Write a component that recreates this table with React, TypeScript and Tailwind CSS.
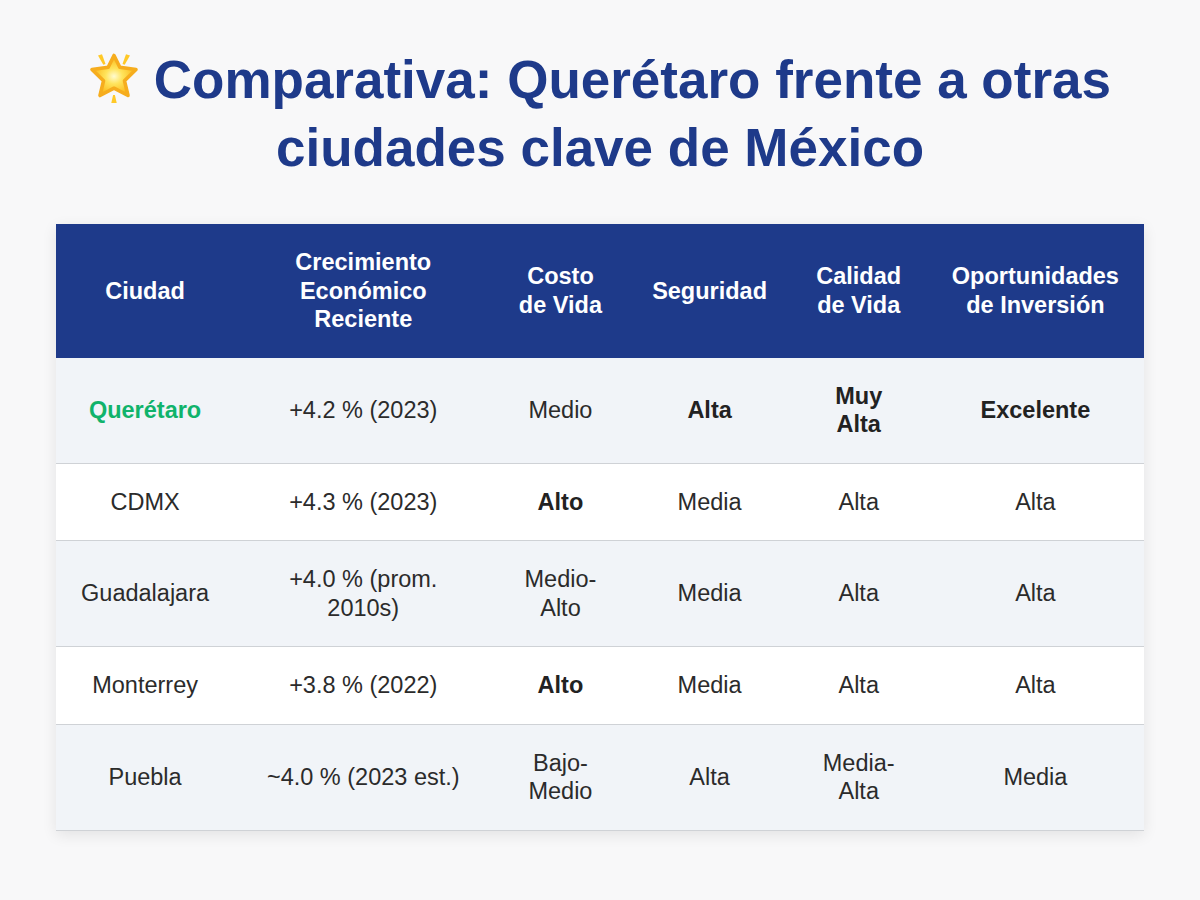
import { ReactNode } from 'react'

// ─── Datos ────────────────────────────────────────────────────────────────────

interface Row {
  ciudad: string
  crecimiento: string
  costo: ReactNode
  seguridad: ReactNode
  calidad: ReactNode
  inversion: ReactNode
  highlight?: boolean
}

const B = ({ children }: { children: ReactNode }) => (
  <span className="font-bold text-[#222]">{children}</span>
)

const rows: Row[] = [
  {
    ciudad: 'Querétaro',
    crecimiento: '+4.2 % (2023)',
    costo: 'Medio',
    seguridad: <B>Alta</B>,
    calidad: <B>Muy Alta</B>,
    inversion: <B>Excelente</B>,
    highlight: true,
  },
  {
    ciudad: 'CDMX',
    crecimiento: '+4.3 % (2023)',
    costo: <B>Alto</B>,
    seguridad: 'Media',
    calidad: 'Alta',
    inversion: 'Alta',
  },
  {
    ciudad: 'Guadalajara',
    crecimiento: '+4.0 % (prom. 2010s)',
    costo: 'Medio-Alto',
    seguridad: 'Media',
    calidad: 'Alta',
    inversion: 'Alta',
  },
  {
    ciudad: 'Monterrey',
    crecimiento: '+3.8 % (2022)',
    costo: <B>Alto</B>,
    seguridad: 'Media',
    calidad: 'Alta',
    inversion: 'Alta',
  },
  {
    ciudad: 'Puebla',
    crecimiento: '~4.0 % (2023 est.)',
    costo: 'Bajo-Medio',
    seguridad: 'Alta',
    calidad: 'Media-Alta',
    inversion: 'Media',
  },
]

const headers = [
  'Ciudad',
  'Crecimiento Económico Reciente',
  'Costo de Vida',
  'Seguridad',
  'Calidad de Vida',
  'Oportunidades de Inversión',
]

const widths = ['w-[178px]', 'w-[258px]', 'w-[136px]', 'w-[162px]', 'w-[136px]', 'w-[217px]']

// ─── Icono ────────────────────────────────────────────────────────────────────

function GlowingStar() {
  return (
    <svg
      viewBox="0 0 50 52"
      className="inline-block h-[52px] w-[50px] align-[-6px]"
      aria-hidden
    >
      <defs>
        <radialGradient id="starFill" cx="0.5" cy="0.52" r="0.55">
          <stop offset="0" stopColor="#fffbd0" />
          <stop offset="0.35" stopColor="#ffe45c" />
          <stop offset="0.8" stopColor="#fbbf24" />
          <stop offset="1" stopColor="#f39a12" />
        </radialGradient>
      </defs>
      <g fill="#ffc928">
        <path d="M9 3.5 L13 2.2 L16.5 12 L14.3 12.8 Z" />
        <path d="M41 3.5 L37 2.2 L33.5 12 L35.7 12.8 Z" />
        <path d="M22.3 51 L27.7 51 L25.9 43 L24.1 43 Z" />
      </g>
      <path
        d="M25 3.5 L30.8 15.2 L47 17.5 L35.5 28.8 L39 43.5 L25 36.2 L11 43.5 L14.5 28.8 L3 17.5 L19.2 15.2 Z"
        fill="url(#starFill)"
        stroke="#f6ad1e"
        strokeWidth="3.6"
        strokeLinejoin="round"
      />
    </svg>
  )
}

// ─── Página ───────────────────────────────────────────────────────────────────

export default function App() {
  return (
    <div className="min-h-[900px] bg-[#f8f8f9] px-14 pt-[46px] pb-16 font-['Liberation_Sans',Arial,sans-serif]">
      <h1 className="text-center text-[53px] font-bold leading-[68px] text-[#1e3a8a]">
        <GlowingStar /> Comparativa: Querétaro frente a otras ciudades clave de México
      </h1>

      <div className="mt-[42px] bg-white shadow-[0_4px_14px_rgba(0,0,0,0.09)]">
        <table className="w-full table-fixed border-collapse text-center text-[23.5px] leading-[28.5px] text-[#2b2b2b]">
          <colgroup>
            {widths.map((w, i) => (
              <col key={i} className={w} />
            ))}
          </colgroup>
          <thead>
            <tr className="bg-[#1e3a8a]">
              {headers.map((h) => (
                <th key={h} className="px-[21px] py-6 align-middle font-bold text-white">
                  {h}
                </th>
              ))}
            </tr>
          </thead>
          <tbody>
            {rows.map((r, i) => (
              <tr
                key={r.ciudad}
                className={`border-b border-[#cfd2d6] ${i % 2 === 0 ? 'bg-[#f1f4f8]' : 'bg-white'}`}
              >
                <td className="px-[21px] py-6 align-middle">
                  {r.highlight ? (
                    <span className="font-bold text-[#10b36b]">{r.ciudad}</span>
                  ) : (
                    r.ciudad
                  )}
                </td>
                <td className="px-[21px] py-6 align-middle">{r.crecimiento}</td>
                <td className="px-[21px] py-6 align-middle">{r.costo}</td>
                <td className="px-[21px] py-6 align-middle">{r.seguridad}</td>
                <td className="px-[21px] py-6 align-middle">{r.calidad}</td>
                <td className="px-[21px] py-6 align-middle">{r.inversion}</td>
              </tr>
            ))}
          </tbody>
        </table>
      </div>
    </div>
  )
}
